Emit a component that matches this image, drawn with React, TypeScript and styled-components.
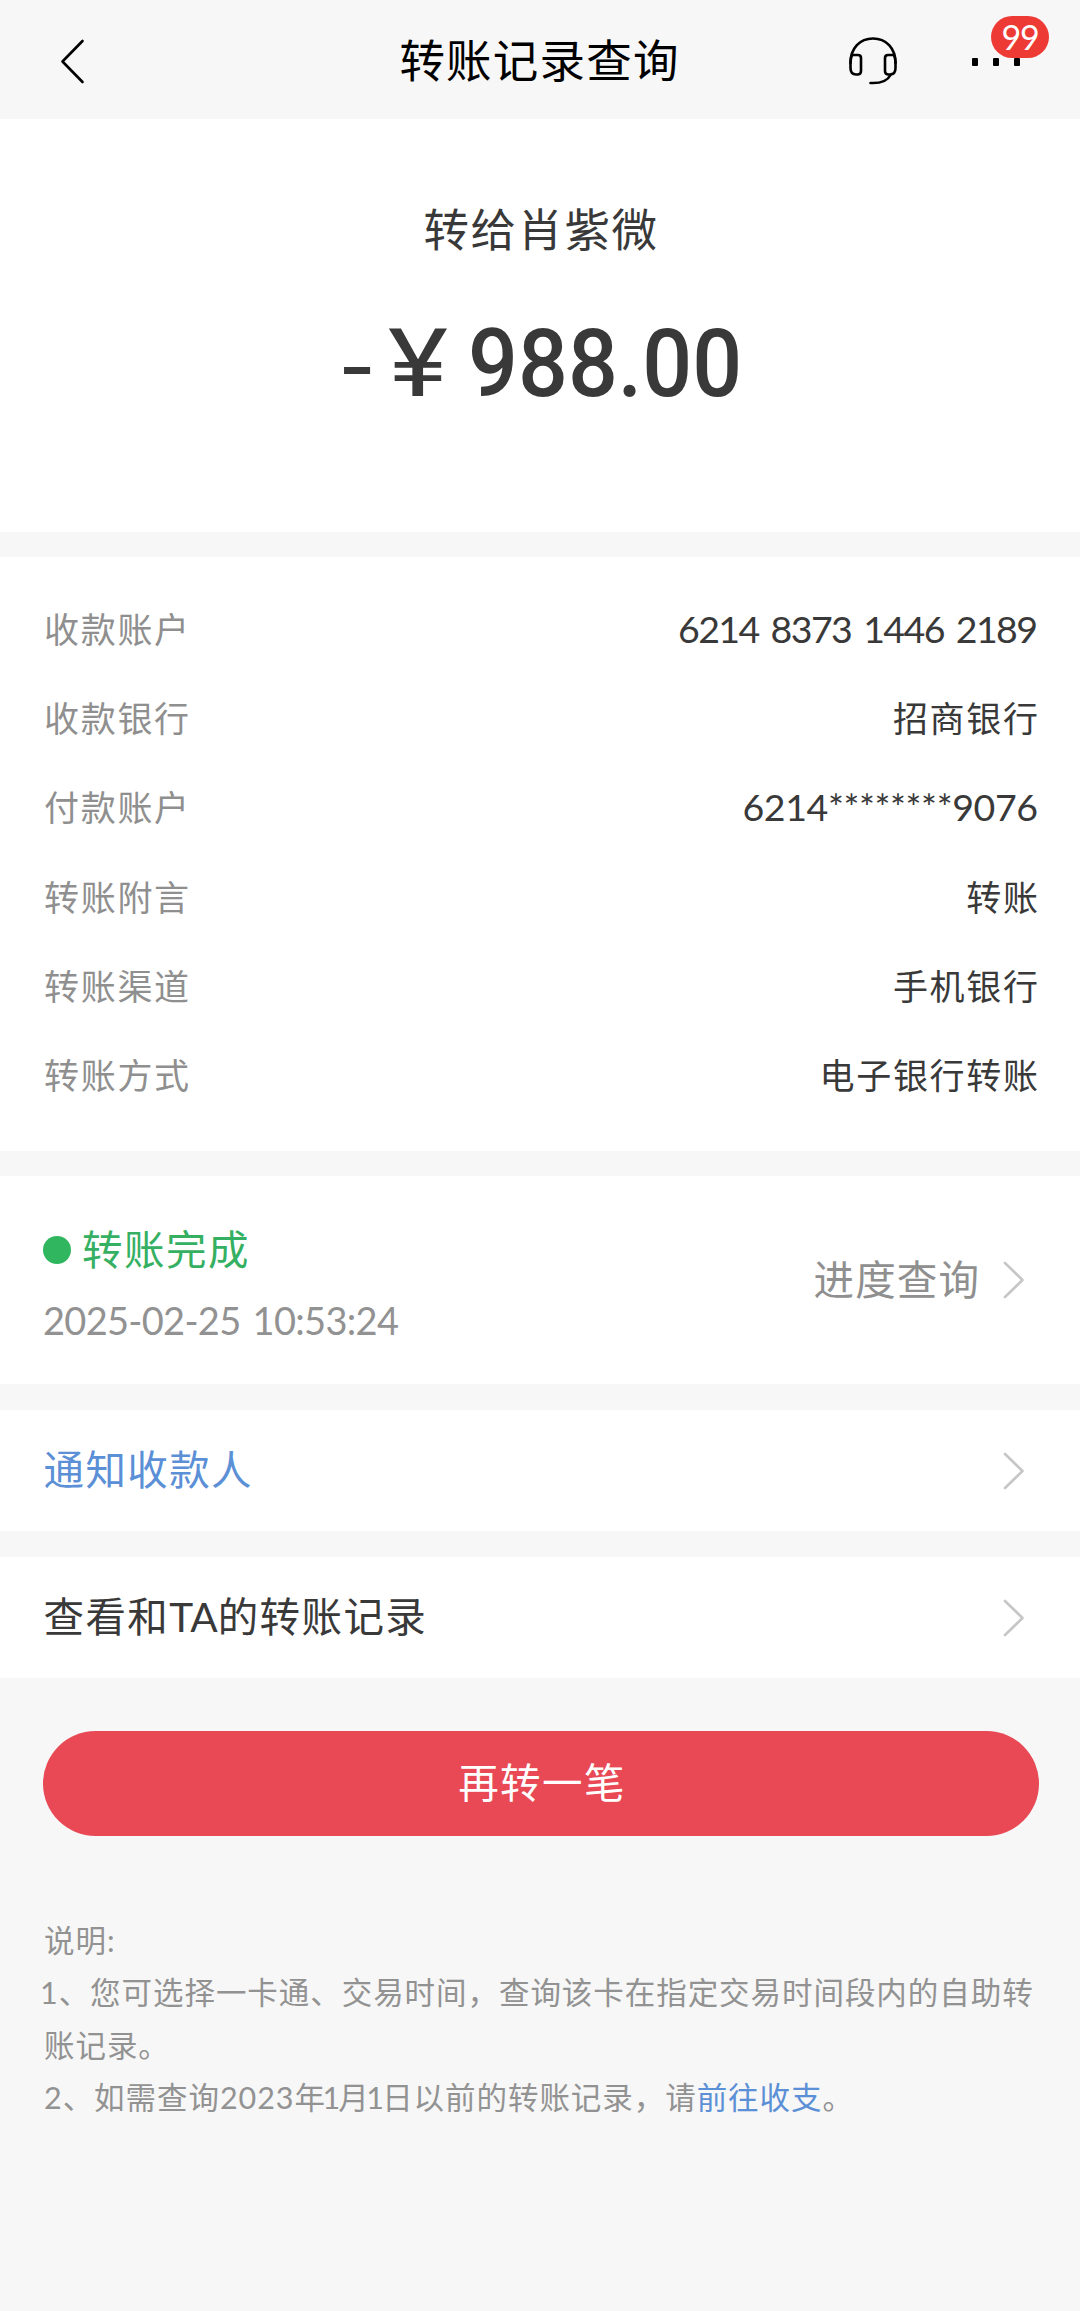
import React from "react";
import styled, { createGlobalStyle } from "styled-components";

const GlobalStyle = createGlobalStyle`
  * { box-sizing: border-box; }
  body { margin: 0; background: #f7f7f7; }
`;

const Page = styled.div`
  width: 1080px;
  height: 2311px;
  overflow: hidden;
  display: flex;
  flex-direction: column;
  background: #f7f7f7;
  color: #393939;
  font-family: Lato, "Noto Sans CJK SC", sans-serif;
`;

const Header = styled.header`
  height: 119px;
  flex: none;
  display: grid;
  grid-template-columns: 1fr auto 1fr;
  align-items: center;
  padding: 3px 60px 0 59px;
`;

const Title = styled.h1`
  margin: 0;
  font-size: 45.5px;
  font-weight: 400;
  line-height: 60px;
  letter-spacing: 1.2px;
  color: #000;
`;

const HeaderActions = styled.div`
  display: flex;
  justify-content: flex-end;
  align-items: center;
  gap: 75px;
`;

const MoreButton = styled.div`
  position: relative;
  display: flex;
  gap: 15px;
  margin-top: 1px;
`;

const MoreDot = styled.i`
  width: 6px;
  height: 8px;
  border-radius: 1px;
  background: #000;
`;

const Badge = styled.span`
  position: absolute;
  left: 19px;
  top: -42px;
  width: 58px;
  height: 42px;
  border-radius: 21px;
  background: #ee3a35;
  color: #fff;
  font-size: 34px;
  line-height: 42px;
  letter-spacing: -1.2px;
  text-align: center;
`;

const Section = styled.section`
  flex: none;
  background: #fff;
  margin-bottom: 26px;
`;

const Summary = styled(Section)`
  height: 413px;
  margin-bottom: 25px;
  padding: 81px 0 0 2px;
  display: flex;
  flex-direction: column;
  align-items: center;
`;

const Payee = styled.div`
  font-size: 45.5px;
  line-height: 60px;
  letter-spacing: 1.5px;
`;

const Amount = styled.div`
  margin-top: 49px;
  height: 110px;
  display: flex;
  align-items: center;
  font-family: Roboto, sans-serif;
  font-size: 95px;
  line-height: 110px;
`;

const Minus = styled.span`
  width: 46px;
  padding-top: 6px;
  transform: scaleX(1.15);
  transform-origin: left center;
`;

const Yen = styled.span`
  width: 80px;
  transform: scaleX(1.2);
  transform-origin: left center;
`;

const Digits = styled.span`
  width: 273px;
  font-weight: 500;
  white-space: nowrap;
  transform: scaleX(0.925);
  transform-origin: left center;
`;

const Details = styled(Section)`
  height: 594px;
  margin-bottom: 25px;
  padding: 27px 42px 0 44px;
`;

const Row = styled.div`
  height: 89.3px;
  display: flex;
  align-items: center;
  justify-content: space-between;
  font-size: 35px;
  line-height: 50px;
`;

const Label = styled.span`
  color: #8f8f8f;
  letter-spacing: 1.7px;
`;

const Value = styled.span<{ $number?: boolean; $spacing?: number }>`
  font-size: ${(p) => (p.$number ? 37.5 : 35)}px;
  letter-spacing: ${(p) => p.$spacing ?? 1.7}px;
  margin-right: ${(p) => -(p.$spacing ?? 1.7)}px;
  word-spacing: 4px;
`;

const Status = styled(Section)`
  height: 208px;
  padding: 0 56px 0 43px;
  display: flex;
  align-items: center;
  justify-content: space-between;
`;

const StatusText = styled.div`
  display: flex;
  flex-direction: column;
  gap: 12px;
  padding-top: 10px;
`;

const StatusLine = styled.div`
  display: flex;
  align-items: center;
  gap: 11px;
  font-size: 40.5px;
  line-height: 58px;
  letter-spacing: 1.5px;
  color: #35b062;
`;

const StatusDot = styled.i`
  width: 28px;
  height: 28px;
  border-radius: 50%;
  background: #2fb65e;
`;

const Time = styled.div`
  font-size: 38px;
  line-height: 58px;
  letter-spacing: -0.7px;
  word-spacing: 3px;
  color: #929292;
`;

const Progress = styled.div`
  display: flex;
  align-items: center;
  gap: 22px;
  font-size: 40.5px;
  line-height: 58px;
  letter-spacing: 1.1px;
  color: #8f8f8f;
`;

const LinkRow = styled(Section)<{ $color: string }>`
  height: 121px;
  padding: 0 56px 0 43.5px;
  display: flex;
  align-items: center;
  justify-content: space-between;
  color: ${(p) => p.$color};
`;

const LinkText = styled.span`
  padding-bottom: 6px;
  font-size: 40.5px;
  letter-spacing: 1.4px;
`;

const Tight = styled.span<{ $by: number; $shift?: number }>`
  letter-spacing: ${(p) => -p.$by}px;
  margin-left: ${(p) => -(p.$shift ?? 0)}px;
`;

const Primary = styled.button`
  flex: none;
  width: 996px;
  height: 105px;
  margin: 27px auto 0 43px;
  padding: 0 0 6px 2px;
  border: 0;
  border-radius: 53px;
  background: #e84955;
  color: #fff;
  font: inherit;
  font-size: 40.5px;
  letter-spacing: 1.4px;
`;

const Notes = styled.div`
  margin: 78px 0 0 44px;
  width: 1000px;
  font-size: 30.5px;
  line-height: 52.4px;
  letter-spacing: 0.95px;
  color: #929292;
`;

const NoteLine = styled.p<{ $indent?: number }>`
  margin: 0;
  text-indent: ${(p) => p.$indent ?? 0}px;
`;

const NoteLink = styled.a`
  color: #5b8fd6;
`;

const Svg = styled.svg`
  display: block;
  fill: none;
  stroke-linecap: round;
  stroke-linejoin: round;
`;

const BackIcon = () => (
  <Svg width="26" height="46" viewBox="0 0 26 46" stroke="#000" strokeWidth="2.6">
    <path d="M23.500 3 3.500 23.500 23.500 44" />
  </Svg>
);

const Chevron = () => (
  <Svg width="22" height="38" viewBox="0 0 22 38" stroke="#c6c6c6" strokeWidth="2.6">
    <path d="M3 2 20.500 19 3 36" />
  </Svg>
);

const Headset = () => (
  <Svg width="48" height="48" viewBox="0 0 48 48" stroke="#000" strokeWidth="2.6">
    <path d="M1.500 26C1.500 11 11 1.500 24 1.500S46.500 11 46.500 26" />
    <path d="M4.500 18H9Q12 18 12 21V34Q12 37.500 8.500 37.500H7Q1.500 37.500 1.500 31V25Q1.500 21 3 18Z" />
    <path d="M43.500 18H39Q36 18 36 21V34Q36 37.500 39.500 37.500H41Q46.500 37.500 46.500 31V25Q46.500 21 45 18Z" />
    <path d="M41.500 38C38.500 44 32 46.500 21.500 46" />
  </Svg>
);

const rows: { label: string; value: string; number?: boolean; spacing?: number }[] = [
  { label: "收款账户", value: "6214 8373 1446 2189", number: true, spacing: -1.6 },
  { label: "收款银行", value: "招商银行" },
  { label: "付款账户", value: "6214********9076", number: true, spacing: -0.4 },
  { label: "转账附言", value: "转账" },
  { label: "转账渠道", value: "手机银行" },
  { label: "转账方式", value: "电子银行转账" },
];

export default function App() {
  return (
    <Page lang="zh-CN">
      <GlobalStyle />
      <Header>
        <BackIcon />
        <Title>转账记录查询</Title>
        <HeaderActions>
          <Headset />
          <MoreButton>
            <MoreDot />
            <MoreDot />
            <MoreDot />
            <Badge>99</Badge>
          </MoreButton>
        </HeaderActions>
      </Header>
      <Summary>
        <Payee>转给肖紫微</Payee>
        <Amount>
          <Minus>-</Minus>
          <Yen>¥</Yen>
          <Digits>988.00</Digits>
        </Amount>
      </Summary>
      <Details>
        {rows.map((r) => (
          <Row key={r.label}>
            <Label>{r.label}</Label>
            <Value $number={r.number} $spacing={r.spacing}>{r.value}</Value>
          </Row>
        ))}
      </Details>
      <Status>
        <StatusText>
          <StatusLine>
            <StatusDot />
            转账完成
          </StatusLine>
          <Time>2025-02-25 10:53:24</Time>
        </StatusText>
        <Progress>
          进度查询
          <Chevron />
        </Progress>
      </Status>
      <LinkRow $color="#5b8fd6">
        <LinkText>通知收款人</LinkText>
        <Chevron />
      </LinkRow>
      <LinkRow $color="#393939">
        <LinkText>
          查看和<Tight $by={0}>TA</Tight>的转账记录
        </LinkText>
        <Chevron />
      </LinkRow>
      <Primary>再转一笔</Primary>
      <Notes>
        <NoteLine>说明:</NoteLine>
        <NoteLine $indent={-4}>
          1、您可选择一卡通、交易时间，查询该卡在指定交易时间段内的自助转账记录。
        </NoteLine>
        <NoteLine>
          2、如需查询2023年<Tight $by={1.8} $shift={3.5}>1</Tight>月
          <Tight $by={1.8} $shift={3.5}>1</Tight>
          日以前的转账记录，请<NoteLink>前往收支</NoteLink>。
        </NoteLine>
      </Notes>
    </Page>
  );
}
